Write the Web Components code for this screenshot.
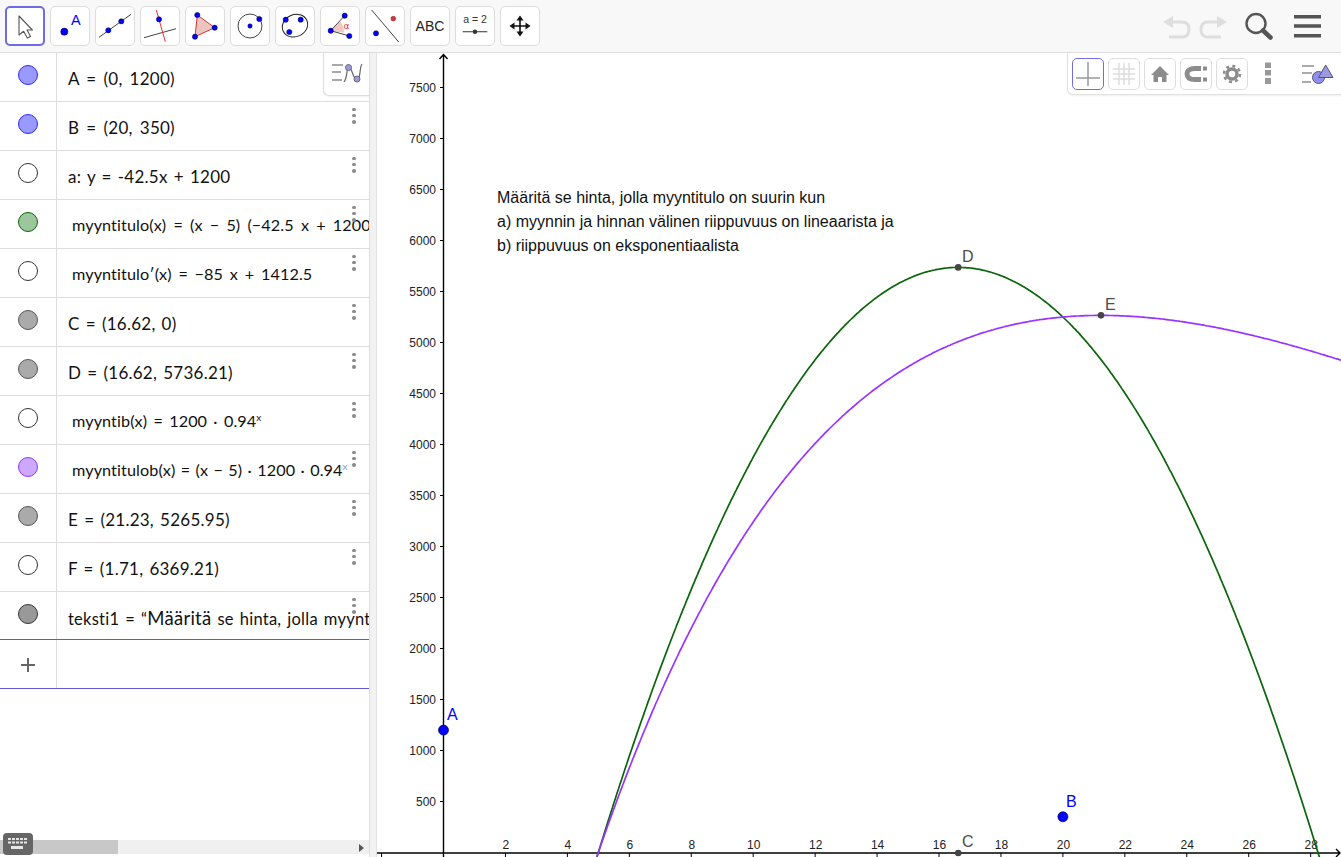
<!DOCTYPE html>
<html lang="fi"><head><meta charset="utf-8"><title>GeoGebra</title>
<style>html,body{margin:0;height:100%;overflow:hidden;background:#fff}</style></head>
<body>
<gg-app></gg-app>
<script>
const def=(n,css,html)=>{customElements.define(n,class extends HTMLElement{constructor(){super();this.attachShadow({mode:'open'}).innerHTML=`<style>${css}</style>${typeof html==='function'?html(this):html}`}})};
const dot=(x,y,r=2.6,f='#00f',s='#003')=>`<circle cx="${x}" cy="${y}" r="${r}" fill="${f}" stroke="${s}" stroke-width=".5"/>`;
const TOOLS=[
`<path d="M14 10V29L18.6 25.3 22.4 32 25.6 30.4 22 24H27.4Z" fill="#fff" stroke="#555" stroke-width="1.1" stroke-linejoin="round"/>`,
`${dot(14.3,25.7,3.6)}<text x="21" y="19" font-size="14.5" fill="#00f" font-family="Liberation Sans">A</text>`,
`<path d="M4 31.3 36 8.3" stroke="#444" fill="none"/>${dot(13.3,24.3)}${dot(26.3,15.3)}`,
`<path d="M4 31.7 36 22.7" stroke="#444" fill="none"/><path d="M16.3 4 25.3 35.7" stroke="#d33" fill="none"/>${dot(19,13.3)}`,
`<path d="M12.3 9 29.7 21.7 10 30.7Z" fill="#ecc5c0" stroke="#d33"/>${dot(12.3,9)}${dot(29.7,21.7)}${dot(10,30.7)}`,
`<circle cx="20" cy="20" r="12" fill="none" stroke="#444"/>${dot(20,20,2.2)}${dot(29.3,13)}`,
`<ellipse cx="20" cy="19.7" rx="13" ry="11" transform="rotate(-25 20 19.7)" fill="none" stroke="#222"/>${dot(10.7,13.7)}${dot(25.7,13.7)}${dot(14.3,26)}`,
`<path d="M10.7 24.7 20 15.4Q24 19 24 26.8Z" fill="#f1c7c2"/><path d="M24.7 9.7 10.7 24.7 29.3 30" fill="none" stroke="#444"/>${dot(10.7,24.7)}${dot(24.7,9.7)}${dot(29.3,30)}<text x="23.5" y="23" font-size="9" fill="#d33" font-family="DejaVu Sans">α</text>`,
`<path d="M6.7 4 33.7 36" stroke="#444" fill="none"/>${dot(11,27.3)}${dot(28.3,12.7,2.4,'#d33','#622')}`,
`<text x="20" y="25" text-anchor="middle" font-size="14" fill="#222" font-family="Liberation Sans">ABC</text>`,
`<text x="20" y="17" text-anchor="middle" font-size="10.5" fill="#333" font-family="Liberation Sans">a = 2</text><path d="M7.7 25.7H32.3" stroke="#555" stroke-width="1.2"/><circle cx="20" cy="25.7" r="2.2" fill="#333"/>`,
`<path d="M20 13V27M13 20H27" stroke="#111" stroke-width="1.6"/><path d="M20 9.500 16.500 14.500H23.500ZM20 30.500 16.500 25.500H23.500ZM9.500 20 14.500 16.500V23.500ZM30.500 20 25.500 16.500V23.500Z" fill="#111"/>`];

def('gg-tool',`:host{display:block;width:40px;height:40px;box-sizing:border-box;border:1px solid #ddd;border-radius:5px;background:#fff}
:host([active]){border:2px solid #6f6be8}svg{display:block;margin:-1px}:host(:not([active])) svg{margin:0}`,
el=>`<svg width="38" height="38" viewBox="1 1 38 38">${TOOLS[+el.getAttribute('i')]}</svg>`);

def('gg-toolbar',`:host{display:flex;height:53px;box-sizing:border-box;border-bottom:1px solid #ddd;background:#f8f8f8;padding:6px 19px 0 5px;gap:5px;flex:none}
.r{margin-left:auto;display:flex;height:40px;align-items:center}svg{display:block}`,
`${TOOLS.map((_,i)=>`<gg-tool i="${i}"${i?'':' active'}></gg-tool>`).join('')}
<div class="r"><svg width="160" height="40" viewBox="0 0 160 40" fill="none">
<g stroke="#dedede" stroke-width="3"><path d="M7 16H20Q27 16 27 23.500T20 31H7"/><path d="M59 16H46Q39 16 39 23.500T46 31H59"/></g>
<path d="M1 16 11 10V22ZM65 16 55 10V22Z" fill="#dedede"/>
<circle cx="94" cy="17.500" r="9.500" stroke="#555" stroke-width="2.400"/><path d="M101 24.500 108.500 31.500" stroke="#555" stroke-width="4.500" stroke-linecap="round"/>
<path d="M132 10.700H159M132 20H159M132 29.700H159" stroke="#555" stroke-width="3.400"/></svg></div>`);

def('gg-row',`:host{display:flex;height:var(--h,49px);box-sizing:border-box;border-bottom:1px solid var(--line,#ddd);position:relative;flex:none}
.m{width:56px;flex:none;border-right:1px solid #ddd;display:flex;justify-content:center;align-items:flex-start}
.c{width:20px;height:20px;box-sizing:border-box;border-radius:50%;margin-top:12px;border:1px solid var(--b,#333);background:var(--f,#fff)}
.t{flex:1;min-width:0;overflow:hidden;white-space:nowrap;padding:var(--pt,14px) 0 0 var(--pl,11px);font:var(--fs,17px)/24px Lato,"Open Sans",sans-serif;color:#111;letter-spacing:var(--ls,.25px);word-spacing:var(--ws,1.500px)}
.d{position:absolute;left:352px;top:5.500px;display:grid;gap:2.400px}.d i{width:3.800px;height:3.800px;border-radius:50%;background:#8a8a8a;display:block}
:host([nodots]) .d{display:none}:host([plus]) .c{display:none}
.p{display:none;margin-top:15.500px;width:18px;height:18px;position:relative}:host([plus]) .p{display:block}
.p:before,.p:after{content:"";position:absolute;background:#666}.p:before{left:2px;right:2px;top:8px;height:2px}.p:after{top:2px;bottom:2px;left:8px;width:2px}`,
el=>`<div class="m"><div class="c" style="--f:${el.getAttribute('f')||'#fff'};--b:${el.getAttribute('b')||'#333'}"></div><div class="p"></div></div><div class="t"><slot></slot></div><div class="d"><i></i><i></i><i></i></div>`);

def('gg-algebra',`:host{display:flex;flex-direction:column;width:370px;flex:none;border-right:1px solid #ddd;box-sizing:border-box;position:relative;background:#fff;overflow:hidden}
.tog{position:absolute;right:0;top:0;width:46px;height:43px;box-sizing:border-box;background:#fff;border:solid #ddd;border-width:0 0 1px 1px;border-bottom-left-radius:6px;box-shadow:0 1px 2px #0001}
.sb{margin-top:auto;margin-bottom:3px;height:14px;background:#f0f0f0;position:relative;flex:none}
.th{position:absolute;left:0;top:0;bottom:0;width:118px;background:#c8c8c8}
.ar{position:absolute;right:5px;top:3.500px;border-left:5px solid #555;border-top:4px solid transparent;border-bottom:4px solid transparent}
.kb{position:absolute;left:3px;bottom:2px;width:30px;height:22px;background:#666;border-radius:4px}svg{display:block}`,
`<slot></slot><div class="sb"><div class="th"></div><div class="ar"></div></div>
<div class="kb"><svg width="30" height="22" fill="#e6e6e6"><path d="M5 5h3v2H5zM9 5h3v2H9zM13 5h3v2h-3zM17 5h3v2h-3zM21 5h3v2h-3zM5 8.500h3v2H5zM9 8.500h3v2H9zM13 8.500h3v2h-3zM17 8.500h3v2h-3zM21 8.500h3v2h-3zM8 13h12v3H8z"/></svg></div>
<div class="tog"><svg width="46" height="43" fill="none"><path d="M8 12H19M8 19H17M8 27H18" stroke="#a8a8a8" stroke-width="2"/><path d="M20 29C24 24 22 14 25 14S29 27 33 27 35 15 38 11" stroke="#666" stroke-width="1.200"/><circle cx="24.500" cy="14.500" r="3" fill="#9a9ae0" stroke="#667"/><circle cx="33" cy="26" r="3" fill="#9a9ae0" stroke="#667"/></svg></div>`);

def('gg-stylebar',`:host{position:absolute;right:0;top:0;height:42px;width:274px;box-sizing:border-box;background:#fff;border:solid #e2e2e2;border-width:0 0 1px 1px;border-bottom-left-radius:6px;box-shadow:0 1px 2px #0001;display:flex;gap:4px;padding:5px 0 0 4px}
.b{width:32px;height:32px;box-sizing:border-box;border:1px solid #ddd;border-radius:5px;flex:none}.b.on{border-color:#6f6be8}svg{display:block;flex:none}`,
`<div class="b on"><svg width="30" height="30" fill="none" stroke="#999" stroke-width="1.500"><path d="M15 3V27M3 19H27"/></svg></div>
<div class="b"><svg width="30" height="30" fill="none" stroke="#ddd" stroke-width="1.500"><path d="M10 4V26M15 4V26M20 4V26M4 10H26M4 15H26M4 20H26"/></svg></div>
<div class="b"><svg width="30" height="30" fill="#8c8c8c"><path d="M15 7 24 16H21.500V23H17V18H13V23H8.500V16H6Z"/></svg></div>
<div class="b"><svg width="30" height="30" fill="none"><path d="M20 9.500H14Q6 9.500 6 15T14 20.500H20" stroke="#8c8c8c" stroke-width="4.800"/><path d="M22 7.500h4v4h-4zM22 18.500h4v4h-4z" fill="#8c8c8c"/></svg></div>
<div class="b"><svg width="30" height="30" fill="none"><circle cx="15" cy="15" r="5" stroke="#8c8c8c" stroke-width="3.500"/><circle cx="15" cy="15" r="8" stroke="#8c8c8c" stroke-width="2.500" stroke-dasharray="3 3.300"/></svg></div>
<svg width="28" height="32" style="margin-left:1px" fill="#999"><path d="M12 4.500h6v5.500h-6zM12 12h6v5.500h-6zM12 20h6v6h-6z"/></svg>
<svg width="36" height="32" fill="none" style="margin-left:15px"><path d="M2 8H14M2 15H12M2 24H11" stroke="#aaa" stroke-width="1.800"/><circle cx="18.500" cy="19.500" r="6" fill="#8f8ff0" stroke="#557"/><path d="M25.700 7 33 19.500H18.500Z" fill="#9a9ae0" stroke="#557"/></svg>`);

def('gg-note',`:host{position:absolute;left:120px;top:133px;font:16px/24px "Liberation Sans",Arial,sans-serif;color:#111;white-space:nowrap;display:block}`,`<slot></slot>`);

const X0=66.5,Y0=800,SX=30.97,SY=0.102; // graphics-local origin (panel starts at 377,53)
const px=x=>X0+x*SX,py=y=>799.5-y*SY;
const curve=f=>{let p=[];for(let x=4.8;x<29.2;x+=0.05){p.push(px(x).toFixed(1)+','+py(f(x)).toFixed(1))}return p.join(' ')};
const lbl=(x,y,t,c,s=16)=>`<text x="${x-377}" y="${y-53}" fill="${c}" font-size="${s}">${t}</text>`;
def('gg-graphics',`:host{display:block;position:relative;flex:1;min-width:0;background:#fff;overflow:hidden}svg{display:block;position:absolute;left:0;top:0;font-family:"Liberation Sans",Arial,sans-serif}`,
()=>{let s='';
for(let v=500;v<=7500;v+=500){s+=`<path d="M${X0-3.500} ${py(v)}H${X0}" stroke="#000"/><text x="${X0-7.500}" y="${py(v)+4}" text-anchor="end" font-size="12" fill="#222">${v}</text>`}
for(let v=-2;v<=28;v+=2){if(!v)continue;s+=`<path d="M${px(v)} ${Y0}v4" stroke="#000"/>`;if(v>0)s+=`<text x="${px(v)+.5}" y="${Y0-4}" text-anchor="middle" font-size="12" fill="#222">${v}</text>`}
return `<svg width="964" height="804" viewBox="0 0 964 804" fill="none">
<path d="M${X0} 804V1.500M${X0-4} 6 ${X0} 1.500 ${X0+4} 6" stroke="#000" stroke-width="1.400"/>
<path d="M0 ${Y0}H963M959 ${Y0-4} 963 ${Y0} 959 ${Y0+4}" stroke="#000" stroke-width="1.400"/>${s}
<polyline points="${curve(x=>(x-5)*(-42.5*x+1200))}" stroke="#0a640a" stroke-width="1.700"/>
<polyline points="${curve(x=>(x-5)*1200*Math.pow(.94025,x))}" stroke="#9933ff" stroke-width="1.700"/>
<circle cx="${X0}" cy="${py(1200)}" r="5" fill="#00f" stroke="#004" stroke-width=".7"/>
<circle cx="${px(20)}" cy="${py(350)}" r="5" fill="#00f" stroke="#004" stroke-width=".7"/>
<circle cx="${px(16.62)}" cy="${Y0}" r="3.300" fill="#444"/><circle cx="${px(16.62)}" cy="${py(5736.21)}" r="3.300" fill="#444"/><circle cx="${px(21.23)}" cy="${py(5265.95)}" r="3.300" fill="#444"/>
${lbl(447,720,'A','#00f')}${lbl(1066,807,'B','#00f')}${lbl(962,847,'C','#4d4d4d')}${lbl(962,262,'D','#4d4d4d')}${lbl(1105,310,'E','#4d4d4d')}
</svg><gg-note><slot></slot></gg-note><gg-stylebar></gg-stylebar>`});

const M='--pl:15px;--pt:13px;--fs:16.200px;--ls:.1px;';
def('gg-app',`:host{display:flex;flex-direction:column;height:857px;width:1341px}
.main{display:flex;flex:1;min-height:0}.sp{width:7px;flex:none;background:#f2f2f2;border-right:1px solid #e2e2e2;box-sizing:border-box}
sup{font-size:10px;line-height:0;vertical-align:6px}.big{font-size:18.500px}`,
`<gg-toolbar></gg-toolbar><div class="main"><gg-algebra>
<gg-row nodots f="#9999ff" b="#2a2aff" style="--ws:2.500px">A = (0, 1200)</gg-row>
<gg-row f="#9999ff" b="#2a2aff" style="--ws:2.500px">B = (20, 350)</gg-row>
<gg-row>a: y = -42.5x + 1200</gg-row>
<gg-row style="${M}--ws:2.900px" f="#9cc79c" b="#0a640a">myyntitulo(x) = (x − 5) (−42.5 x + 1200</gg-row>
<gg-row style="${M}--ws:2.500px">myyntitulo′(x) = −85 x + 1412.5</gg-row>
<gg-row f="#aaa" b="#555">C = (16.62, 0)</gg-row>
<gg-row f="#aaa" b="#555">D = (16.62, 5736.21)</gg-row>
<gg-row style="${M}--ws:2px">myyntib(x) = 1200 · 0.94<sup>x</sup></gg-row>
<gg-row style="${M}--ws:1.100px" f="#cca8ff" b="#9933ff">myyntitulob(x) = (x − 5) · 1200 · 0.94<sup style="color:#999">x</sup></gg-row>
<gg-row f="#aaa" b="#555">E = (21.23, 5265.95)</gg-row>
<gg-row>F = (1.71, 6369.21)</gg-row>
<gg-row style="--h:48px;--line:#6557d2;--fs:16.500px;--ws:1.500px" f="#999" b="#333">teksti1 = “<span class="big">Määritä</span> se hinta, jolla myyntitulo</gg-row>
<gg-row style="--line:#6557d2" nodots plus></gg-row>
</gg-algebra><div class="sp"></div><gg-graphics>Määritä se hinta, jolla myyntitulo on suurin kun<br>a) myynnin ja hinnan välinen riippuvuus on lineaarista ja<br>b) riippuvuus on eksponentiaalista</gg-graphics></div>`);
</script>
</body></html>
